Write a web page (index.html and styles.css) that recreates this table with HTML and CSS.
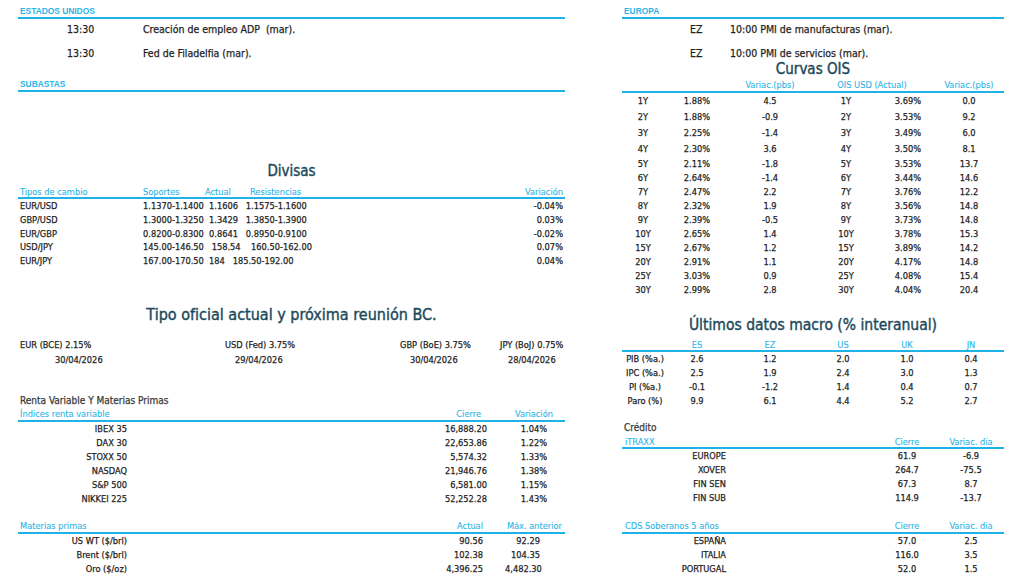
FILE: index.html
```html
<!DOCTYPE html>
<html lang="es">
<head>
<meta charset="utf-8">
<title>Mercados</title>
<link rel="stylesheet" href="styles.css">
</head>
<body>
<div class="page">
  <section class="col col-left">
    <div class="sec-head">ESTADOS UNIDOS</div>
    <div class="events events-us">
      <div class="ev"><span class="ev-key">13:30</span><span>Creación de empleo ADP  (mar).</span></div>
      <div class="ev"><span class="ev-key">13:30</span><span>Fed de Filadelfia (mar).</span></div>
    </div>
    <div class="sec-head sec-subastas">SUBASTAS</div>

    <h2 class="title title-divisas">Divisas</h2>
    <div class="fx">
      <div class="fx-head thead"><span class="pl">Tipos de cambio</span><span>Soportes</span><span>Actual</span><span>Resistencias</span><span class="pr">Variación</span></div>
      <div class="fx-row"><span class="pl">EUR/USD</span><span class="pre">1.1370-1.1400  1.1606   1.1575-1.1600</span><span class="pr">-0.04%</span></div>
      <div class="fx-row"><span class="pl">GBP/USD</span><span class="pre">1.3000-1.3250  1.3429   1.3850-1.3900</span><span class="pr">0.03%</span></div>
      <div class="fx-row"><span class="pl">EUR/GBP</span><span class="pre">0.8200-0.8300  0.8641   0.8950-0.9100</span><span class="pr">-0.02%</span></div>
      <div class="fx-row"><span class="pl">USD/JPY</span><span class="pre">145.00-146.50   158.54    160.50-162.00</span><span class="pr">0.07%</span></div>
      <div class="fx-row"><span class="pl">EUR/JPY</span><span class="pre">167.00-170.50  184   185.50-192.00</span><span class="pr">0.04%</span></div>
    </div>

    <h2 class="title title-bc">Tipo oficial actual y próxima reunión BC.</h2>
    <div class="bc">
      <div class="bc-cell"><div class="bc-rate">EUR (BCE) 2.15%</div><div class="bc-date d-eur">30/04/2026</div></div>
      <div class="bc-cell"><div class="bc-rate">USD (Fed) 3.75%</div><div class="bc-date d-usd">29/04/2026</div></div>
      <div class="bc-cell"><div class="bc-rate">GBP (BoE) 3.75%</div><div class="bc-date d-gbp">30/04/2026</div></div>
      <div class="bc-cell"><div class="bc-rate">JPY (BoJ) 0.75%</div><div class="bc-date d-jpy">28/04/2026</div></div>
    </div>

    <div class="sub-title renta-title">Renta Variable Y Materias Primas</div>
    <div class="eq">
      <div class="eq-row thead"><span class="span2 pl">Índices renta variable</span><span class="c-cierre-h">Cierre</span><span class="c-center">Variación</span></div>
      <div class="eq-row"><span class="c-name">IBEX 35</span><span></span><span class="c-cierre">16,888.20</span><span class="c-center">1.04%</span></div>
      <div class="eq-row"><span class="c-name">DAX 30</span><span></span><span class="c-cierre">22,653.86</span><span class="c-center">1.22%</span></div>
      <div class="eq-row"><span class="c-name">STOXX 50</span><span></span><span class="c-cierre">5,574.32</span><span class="c-center">1.33%</span></div>
      <div class="eq-row"><span class="c-name">NASDAQ</span><span></span><span class="c-cierre">21,946.76</span><span class="c-center">1.38%</span></div>
      <div class="eq-row"><span class="c-name">S&amp;P 500</span><span></span><span class="c-cierre">6,581.00</span><span class="c-center">1.15%</span></div>
      <div class="eq-row"><span class="c-name">NIKKEI 225</span><span></span><span class="c-cierre">52,252.28</span><span class="c-center">1.43%</span></div>
    </div>

    <div class="eq mp">
      <div class="eq-row thead"><span class="span2 pl">Materias primas</span><span class="c-actual">Actual</span><span class="c-max-h">Máx. anterior</span></div>
      <div class="eq-row"><span class="c-name">US WT ($/brl)</span><span></span><span class="c-actual">90.56</span><span class="c-max">92.29</span></div>
      <div class="eq-row"><span class="c-name">Brent ($/brl)</span><span></span><span class="c-actual">102.38</span><span class="c-max">104.35</span></div>
      <div class="eq-row"><span class="c-name">Oro ($/oz)</span><span></span><span class="c-actual">4,396.25</span><span class="c-max">4,482.30</span></div>
    </div>
  </section>

  <section class="col col-right">
    <div class="sec-head">EUROPA</div>
    <div class="events events-eu">
      <div class="ev"><span class="ev-key">EZ</span><span>10:00 PMI de manufacturas (mar).</span></div>
      <div class="ev"><span class="ev-key">EZ</span><span>10:00 PMI de servicios (mar).</span></div>
    </div>

    <h2 class="title title-ois">Curvas OIS</h2>
    <div class="ois">
      <div class="ois-row thead"><span></span><span></span><span>Variac.(pbs)</span><span class="span2">OIS USD (Actual)</span><span>Variac.(pbs)</span></div>
      <div class="ois-row tall"><span>1Y</span><span>1.88%</span><span>4.5</span><span>1Y</span><span>3.69%</span><span>0.0</span></div>
      <div class="ois-row tall"><span>2Y</span><span>1.88%</span><span>-0.9</span><span>2Y</span><span>3.53%</span><span>9.2</span></div>
      <div class="ois-row tall"><span>3Y</span><span>2.25%</span><span>-1.4</span><span>3Y</span><span>3.49%</span><span>6.0</span></div>
      <div class="ois-row tall"><span>4Y</span><span>2.30%</span><span>3.6</span><span>4Y</span><span>3.50%</span><span>8.1</span></div>
      <div class="ois-row"><span>5Y</span><span>2.11%</span><span>-1.8</span><span>5Y</span><span>3.53%</span><span>13.7</span></div>
      <div class="ois-row"><span>6Y</span><span>2.64%</span><span>-1.4</span><span>6Y</span><span>3.44%</span><span>14.6</span></div>
      <div class="ois-row"><span>7Y</span><span>2.47%</span><span>2.2</span><span>7Y</span><span>3.76%</span><span>12.2</span></div>
      <div class="ois-row"><span>8Y</span><span>2.32%</span><span>1.9</span><span>8Y</span><span>3.56%</span><span>14.8</span></div>
      <div class="ois-row"><span>9Y</span><span>2.39%</span><span>-0.5</span><span>9Y</span><span>3.73%</span><span>14.8</span></div>
      <div class="ois-row"><span>10Y</span><span>2.65%</span><span>1.4</span><span>10Y</span><span>3.78%</span><span>15.3</span></div>
      <div class="ois-row"><span>15Y</span><span>2.67%</span><span>1.2</span><span>15Y</span><span>3.89%</span><span>14.2</span></div>
      <div class="ois-row"><span>20Y</span><span>2.91%</span><span>1.1</span><span>20Y</span><span>4.17%</span><span>14.8</span></div>
      <div class="ois-row"><span>25Y</span><span>3.03%</span><span>0.9</span><span>25Y</span><span>4.08%</span><span>15.4</span></div>
      <div class="ois-row"><span>30Y</span><span>2.99%</span><span>2.8</span><span>30Y</span><span>4.04%</span><span>20.4</span></div>
    </div>

    <h2 class="title title-macro">Últimos datos macro (% interanual)</h2>
    <div class="macro">
      <div class="macro-row thead"><span></span><span>ES</span><span>EZ</span><span>US</span><span>UK</span><span>JN</span></div>
      <div class="macro-row"><span>PIB (%a.)</span><span>2.6</span><span>1.2</span><span>2.0</span><span>1.0</span><span>0.4</span></div>
      <div class="macro-row"><span>IPC (%a.)</span><span>2.5</span><span>1.9</span><span>2.4</span><span>3.0</span><span>1.3</span></div>
      <div class="macro-row"><span>PI (%a.)</span><span>-0.1</span><span>-1.2</span><span>1.4</span><span>0.4</span><span>0.7</span></div>
      <div class="macro-row"><span>Paro (%)</span><span>9.9</span><span>6.1</span><span>4.4</span><span>5.2</span><span>2.7</span></div>
    </div>

    <div class="sub-title credito-title">Crédito</div>
    <div class="cr">
      <div class="cr-row thead"><span class="span2 pl">iTRAXX</span><span>Cierre</span><span>Variac. dia</span></div>
      <div class="cr-row"><span class="c-name">EUROPE</span><span></span><span>61.9</span><span>-6.9</span></div>
      <div class="cr-row"><span class="c-name">XOVER</span><span></span><span>264.7</span><span>-75.5</span></div>
      <div class="cr-row"><span class="c-name">FIN SEN</span><span></span><span>67.3</span><span>8.7</span></div>
      <div class="cr-row"><span class="c-name">FIN SUB</span><span></span><span>114.9</span><span>-13.7</span></div>
    </div>

    <div class="cr cds">
      <div class="cr-row thead"><span class="span2 pl">CDS Soberanos 5 años</span><span>Cierre</span><span>Variac. dia</span></div>
      <div class="cr-row"><span class="c-name">ESPAÑA</span><span></span><span>57.0</span><span>2.5</span></div>
      <div class="cr-row"><span class="c-name">ITALIA</span><span></span><span>116.0</span><span>3.5</span></div>
      <div class="cr-row"><span class="c-name">PORTUGAL</span><span></span><span>52.0</span><span>1.5</span></div>
    </div>
  </section>
</div>
</body>
</html>
```

FILE: styles.css
```css
* { box-sizing: border-box; margin: 0; padding: 0; }
html, body { background: #ffffff; }
body {
  font-family: "DejaVu Sans Condensed", "DejaVu Sans", sans-serif;
  font-stretch: condensed;
  font-size: 9.2px;
  color: #1f1f1f;
  -webkit-text-stroke: 0.25px currentColor;
}
.page {
  display: flex;
  gap: 57px;
  padding-left: 18px;
  width: 1024px;
  height: 583px;
  overflow: hidden;
}
.col { display: flex; flex-direction: column; }
.col-left { width: 547px; }
.col-right { width: 382px; }

/* section headings with cyan rule */
.sec-head {
  padding: 5px 0 0 2px;
  line-height: 12px;
  font-family: "Liberation Sans", Arial, sans-serif;
  font-stretch: normal;
  font-weight: bold;
  font-size: 8.4px;
  color: #2bb4e6;
  -webkit-text-stroke: 0;
  border-bottom: 2px solid #1fb2e6;
}
.sec-subastas { margin-top: 14px; }

.events {
  padding-top: 4px;
  display: flex;
  flex-direction: column;
  gap: 12px;
  font-size: 10.5px;
}
.ev { display: flex; line-height: 12px; white-space: pre; }
.events-us .ev { padding-left: 49px; }
.events-us .ev-key { width: 76px; }
.events-eu .ev { padding-left: 68px; }
.events-eu .ev-key { width: 40px; }

.title {
  font-weight: normal;
  font-size: 15px;
  line-height: 18px;
  text-align: center;
  color: #1d4a5b;
  -webkit-text-stroke: 0.4px currentColor;
}
.title-divisas { margin-top: 70px; }
.title-bc { margin-top: 38px; font-size: 16px; }
.title-ois { margin-top: 2px; line-height: 16px; }
.title-macro { margin-top: 19px; font-size: 15.5px; }

.thead {
  color: #2bb4e6;
  border-bottom: 2px solid #1fb2e6;
  -webkit-text-stroke: 0.1px currentColor;
}
.pl { padding-left: 2px; }
.pr { padding-right: 2px; text-align: right; }
.pre { white-space: pre; }
.span2 { grid-column: span 2; }

/* Divisas */
.fx-head {
  margin-top: 6px;
  display: grid;
  grid-template-columns: 125px 62px 45px 1fr auto;
  line-height: 11px;
}
.fx-row {
  display: grid;
  grid-template-columns: 125px 1fr auto;
  line-height: 13.8px;
}

/* Bancos centrales */
.bc {
  margin-top: 13.5px;
  display: grid;
  grid-template-columns: 205px 175px 100px 67px;
  line-height: 15px;
}
.bc-rate { padding-left: 2px; white-space: nowrap; }
.d-eur { padding-left: 37px; }
.d-usd { padding-left: 12px; }
.d-gbp { padding-left: 12px; }
.d-jpy { padding-left: 10px; }

.sub-title { color: #3a3a3a; padding-left: 2px; font-size: 10px; }
.renta-title { margin-top: 27px; line-height: 13px; }

/* Renta variable / materias primas */
.eq { margin-top: 0.5px; display: flex; flex-direction: column; }
.eq-row {
  display: grid;
  grid-template-columns: 109px 303px 75px 58px;
  line-height: 14px;
  white-space: nowrap;
}
.eq-row.thead { line-height: 12px; }
.c-name { text-align: right; }
.c-cierre { text-align: right; padding-right: 18px; }
.c-cierre-h { text-align: right; padding-right: 24px; }
.c-center { text-align: center; }
.mp { margin-top: 14px; }
.c-actual { text-align: right; padding-right: 22px; }
.c-max { text-align: right; padding-right: 23px; }
.c-max-h { text-align: right; padding-right: 1px; direction: rtl; }

/* OIS */
.ois { margin-top: 2px; display: flex; flex-direction: column; }
.ois-row {
  display: grid;
  grid-template-columns: 42px 66px 80px 72px 52px 70px;
  line-height: 14px;
  text-align: center;
  white-space: nowrap;
}
.ois-row.thead { line-height: 12px; }
.ois-row.tall { line-height: 16px; }

/* Macro */
.macro { margin-top: 5px; display: flex; flex-direction: column; }
.macro-row {
  display: grid;
  grid-template-columns: 46px 58px 88px 58px 70px 58px;
  line-height: 14px;
  text-align: center;
  white-space: nowrap;
}
.macro-row.thead { line-height: 11px; }

/* Crédito / CDS */
.credito-title { margin-top: 14px; line-height: 12px; }
.cr { margin-top: 2px; display: flex; flex-direction: column; }
.cr-row {
  display: grid;
  grid-template-columns: 104px 146px 70px 58px;
  line-height: 14px;
  text-align: center;
  white-space: nowrap;
}
.cr-row.thead { line-height: 11px; }
.cr-row .pl { text-align: left; padding-left: 3px; }
.cr-row .c-name { text-align: right; }
.cds { margin-top: 15px; }
.cds .cr-row.thead { line-height: 12px; }
```
